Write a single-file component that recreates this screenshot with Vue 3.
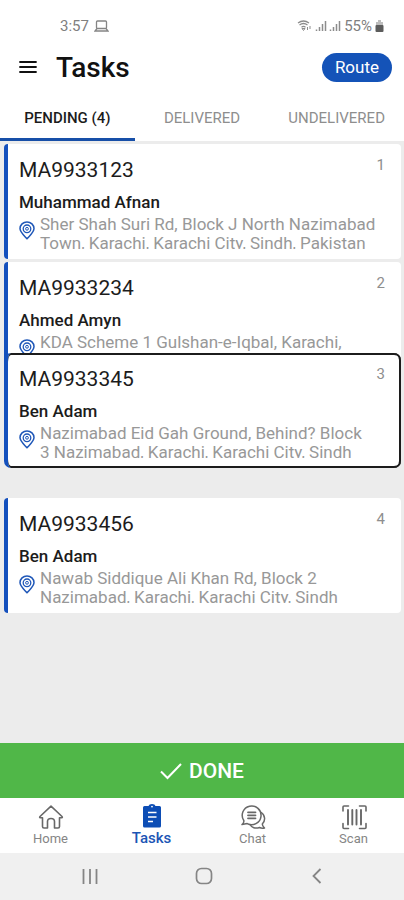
<script setup>
import { ref } from 'vue'

const tabs = ['PENDING (4)', 'DELIVERED', 'UNDELIVERED']
const activeTab = ref(0)

// The no-break space keeps the block number together with the area name.
const tasks = [
  { id: 'MA9933123', name: 'Muhammad Afnan', address: 'Sher Shah Suri Rd, Block J North Nazimabad Town, Karachi, Karachi City, Sindh, Pakistan' },
  { id: 'MA9933234', name: 'Ahmed Amyn', address: 'KDA Scheme 1 Gulshan-e-Iqbal, Karachi,' },
  { id: 'MA9933345', name: 'Ben Adam', address: 'Nazimabad Eid Gah Ground, Behind? Block 3\u00a0Nazimabad, Karachi, Karachi City, Sindh', dragging: true },
  { id: 'MA9933456', name: 'Ben Adam', address: 'Nawab Siddique Ali Khan Rd, Block 2 Nazimabad, Karachi, Karachi City, Sindh' },
]
</script>

<template>
  <div class="screen">
    <div class="status">
      <div class="status-group">
        <span>3:57</span>
        <svg width="15" height="13" viewBox="0 0 15 13" fill="none" stroke="#858585" stroke-width="1.3">
          <rect x="2.5" y="1" width="10" height="7.5" rx="1" />
          <path d="M3 8.500 1 11H14L12 8.500" />
        </svg>
      </div>
      <div class="status-group status-right">
        <svg width="15" height="12" viewBox="0 0 15 12" fill="none" stroke="#8c8c8c" stroke-width="1.3">
          <path d="M1 3Q6.500 -1 12 3M2.500 5Q6.500 2 10.500 5M4.500 7.200Q6.500 5.700 8.500 7.200" />
          <path d="M6.500 10.500 5 8.500H8ZM10.500 7V10M13 6V9" stroke-width="1" />
        </svg>
        <svg width="26" height="12" viewBox="0 0 26 12" fill="none" stroke="#8c8c8c" stroke-width="1.5">
          <path d="M1.500 11V9.500M4.500 11V7M7.500 11V4M10.500 11V1M15.500 11V9.500M18.500 11V7M21.500 11V4M24.500 11V1" />
        </svg>
        <span>55%</span>
        <svg width="9" height="13" viewBox="0 0 9 13">
          <path d="M3 0H6V2H8V5.500H1V2H3Z" fill="#bdbdbd" />
          <rect x="0.500" y="5" width="8" height="7" rx="1" fill="#5c5c5c" />
        </svg>
      </div>
    </div>

    <header class="header">
      <button class="menu" type="button" aria-label="Menu">
        <svg width="18" height="14" viewBox="0 0 18 14" stroke="#111" stroke-width="1.800" stroke-linecap="round">
          <path d="M1 2H17M1 7H17M1 12H17" />
        </svg>
      </button>
      <h1>Tasks</h1>
      <button class="route" type="button">Route</button>
    </header>

    <div class="tabs" role="tablist">
      <button
        v-for="(tab, i) in tabs"
        :key="tab"
        type="button"
        role="tab"
        class="tab"
        :class="{ active: i === activeTab }"
        :aria-selected="i === activeTab"
        @click="activeTab = i"
      >{{ tab }}</button>
    </div>

    <main class="list">
      <article v-for="(task, i) in tasks" :key="task.id" class="card" :class="{ dragging: task.dragging }">
        <div class="card-top">
          <h2>{{ task.id }}</h2>
          <span class="order">{{ i + 1 }}</span>
        </div>
        <div class="name">{{ task.name }}</div>
        <div class="place">
          <svg class="pin" width="16" height="19" viewBox="0 0 16 19" fill="none" stroke="#1f57b8" stroke-width="1.500">
            <path d="M8 17.800C6 15.300 1 11.500 1 7.600A7 6.700 0 0 1 15 7.600C15 11.500 10 15.300 8 17.800Z" stroke-linejoin="round" />
            <circle cx="8" cy="7.800" r="3.800" stroke-width="1.300" />
            <circle cx="8" cy="7.800" r="1.400" stroke-width="1" />
          </svg>
          <p>{{ task.address }}</p>
        </div>
      </article>
    </main>

    <button class="done" type="button">
      <svg width="22" height="18" viewBox="0 0 22 18" fill="none" stroke="#fff" stroke-width="2">
        <path d="M1 8.500 7.500 15 21 1" />
      </svg>
      <span>DONE</span>
    </button>

    <nav class="nav">
      <a href="#home">
        <svg width="26" height="26" viewBox="0 0 26 26" fill="none" stroke="#686868" stroke-width="1.600" stroke-linejoin="round" stroke-linecap="round">
          <path d="M4.500 13.800H2.300C1.500 13.800 1.500 13 2 12.500L13 2.200 24 12.500C24.500 13 24.500 13.800 23.700 13.800H21.500V22.500Q21.500 24 20 24H16.500V17.500Q16.500 14.500 13 14.500T9.500 17.500V24H6Q4.500 24 4.500 22.500Z" />
        </svg>
        <span>Home</span>
      </a>
      <a href="#tasks" class="current">
        <svg width="26" height="26" viewBox="0 0 26 26">
          <path d="M5.500 2H9.500Q10 0 13 0T16.500 2H20.500Q22 2 22 3.500V22Q22 23.500 20.500 23.500H5.500Q4 23.500 4 22V3.500Q4 2 5.500 2Z" fill="#0c4db5" />
          <circle cx="13" cy="2.600" r="0.900" fill="#fff" />
          <path d="M9 8.500H17.500M9 13H17.500M9 17.500H14" stroke="#fff" stroke-width="1.700" />
        </svg>
        <span>Tasks</span>
      </a>
      <a href="#chat">
        <svg width="26" height="26" viewBox="0 0 26 26" fill="none" stroke="#686868" stroke-width="1.500" stroke-linejoin="round" stroke-linecap="round">
          <path d="M3.800 16.500A9.400 9.400 0 1 1 7.200 19.600L2 20.500Q4.300 18.800 3.800 16.500Z" />
          <path d="M21.300 8.500C25.500 11.500 25.500 17 22.300 20Q22.300 22 24.500 24Q21.500 24.500 19.500 23.500C15.500 25 11.500 23.500 10 20.500" />
          <path d="M8 8.300H15.500M8 11.300H15.500M8 14.300H15.500" stroke-width="1.800" />
        </svg>
        <span>Chat</span>
      </a>
      <a href="#scan">
        <svg width="26" height="26" viewBox="0 0 26 26" fill="none" stroke="#686868" stroke-width="1.600" stroke-linejoin="round" stroke-linecap="round">
          <path d="M2 7V3Q2 2 3 2H7.500M18.500 2H24Q25 2 25 3V7M2 19.500V23.500Q2 24.500 3 24.500H7.500M18.500 24.500H24Q25 24.500 25 23.500V19.500" />
          <path d="M7 6V20.500M11.300 6V20.500M15.500 6V20.500M20 6V20.500" stroke-width="1.900" />
        </svg>
        <span>Scan</span>
      </a>
    </nav>

    <div class="system">
      <button type="button" aria-label="Recent apps">
        <svg width="18" height="18" viewBox="0 0 18 18" stroke="#858585" stroke-width="1.800">
          <path d="M2.500 2V17M9 2V17M15.500 2V17" />
        </svg>
      </button>
      <button type="button" aria-label="Home screen">
        <svg width="18" height="18" viewBox="0 0 18 18" fill="none" stroke="#858585" stroke-width="1.700">
          <rect x="1.500" y="1.500" width="15" height="15" rx="5" />
        </svg>
      </button>
      <button type="button" aria-label="Back">
        <svg width="18" height="18" viewBox="0 0 18 18" fill="none" stroke="#858585" stroke-width="1.800">
          <path d="M12.500 2 5.500 9 12.500 16" />
        </svg>
      </button>
    </div>
  </div>
</template>

<style>
body {
  margin: 0;
}
</style>

<style scoped>
.screen {
  display: flex;
  flex-direction: column;
  min-height: 100vh;
  background: #ececec;
  font-family: Roboto, "Liberation Sans", sans-serif;
  color: #1c1c1c;
}
button {
  margin: 0;
  padding: 0;
  border: 0;
  background: none;
  font-family: inherit;
  cursor: pointer;
}
svg {
  display: block;
  flex: none;
}
.status {
  display: flex;
  align-items: center;
  justify-content: space-between;
  padding: 16px 20px 6px 60px;
  background: #fff;
  color: #808080;
  font-size: 15px;
  line-height: 20px;
}
.status-group {
  display: flex;
  align-items: center;
  gap: 5px;
}
.status-right {
  gap: 3px;
}
.header {
  display: flex;
  align-items: center;
  padding: 8px 12px 8px 19px;
  background: #fff;
}
h1 {
  flex: 1;
  margin: 0 0 0 19px;
  padding-top: 2px;
  font-size: 28px;
  line-height: 32px;
  font-weight: 500;
  color: #111;
}
.route {
  padding: 0 13px;
  border-radius: 15px;
  background: #1453b8;
  color: #fff;
  font-size: 17px;
  line-height: 29px;
}
.tabs {
  display: grid;
  grid-template-columns: repeat(3, 1fr);
  background: #fff;
}
.tab {
  padding: 12px 0 5px;
  border-bottom: 3px solid transparent;
  color: #8e8e8e;
  font-size: 15px;
  line-height: 29px;
}
.tab.active {
  border-color: #174fa8;
  color: #1c1c1c;
  font-weight: 500;
}
.list {
  flex: 1;
  display: flex;
  flex-direction: column;
  gap: 3px;
  padding: 3px 3px 20px 4px;
}
.card {
  box-sizing: border-box;
  padding: 14px 16px 10px 11px;
  border-left: 4px solid #1450bd;
  border-radius: 4px;
  background: #fff;
}
.card.dragging {
  position: relative;
  top: -27px;
  border-radius: 7px;
  box-shadow: inset 0 2px #1c1c1c, inset 0 -2px #1c1c1c, inset -2px 0 #1c1c1c;
}
.card-top {
  display: flex;
  justify-content: space-between;
}
h2 {
  margin: 0;
  font-size: 21px;
  line-height: 24px;
  font-weight: 400;
}
.order {
  color: #8e8e8e;
  font-size: 15px;
  line-height: 14px;
}
.name {
  margin-top: 10px;
  font-size: 17px;
  line-height: 20px;
  font-weight: 500;
}
.place {
  display: flex;
  gap: 5px;
  height: 34px;
  margin-top: 3px;
  overflow: hidden;
}
.pin {
  margin-top: 6px;
}
.place p {
  flex: 1;
  margin: 0;
  color: #989898;
  font-size: 17px;
  line-height: 19px;
}
.done {
  display: flex;
  align-items: center;
  justify-content: center;
  gap: 7px;
  padding: 14px 0 12px;
  background: #50b748;
  color: #fff;
  font-size: 21px;
  line-height: 29px;
  font-weight: 500;
}
.nav {
  display: grid;
  grid-template-columns: repeat(4, 1fr);
  padding: 6px 0;
  background: #fff;
}
.nav a {
  display: flex;
  flex-direction: column;
  align-items: center;
  color: #858585;
  font-size: 13px;
  line-height: 17px;
  text-decoration: none;
}
.nav .current {
  color: #1c55b5;
  font-size: 15px;
  font-weight: 500;
}
.system {
  display: flex;
  justify-content: space-between;
  padding: 14px 78px 15px 81px;
  background: #f0f0f0;
}
</style>
